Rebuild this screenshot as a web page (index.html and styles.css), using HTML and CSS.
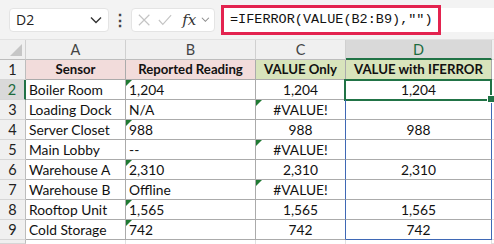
FILE: index.html
```html
<!DOCTYPE html>
<html lang="en">
<head>
    <meta charset="UTF-8">
    <title>IFERROR with VALUE</title>
    <link rel="stylesheet" href="styles.css">
</head>
<body>
    <!-- Formula bar -->
    <div class="toolbar">
        <div class="name-box">
            <span>D2</span>
            <svg class="chevron" width="12" height="8" viewBox="0 0 12 8"><path d="M1 1.5 L6 6.5 L11 1.5" fill="none" stroke="#333" stroke-width="1.4"/></svg>
        </div>
        <div class="dots">&#8942;</div>
        <div class="fx-box">
            <svg width="14" height="14" viewBox="0 0 14 14"><path d="M1 1 L13 13 M13 1 L1 13" stroke="#c4c4c4" stroke-width="1.3"/></svg>
            <svg width="16" height="14" viewBox="0 0 16 14"><path d="M1 7 L5.5 12 L15 1.5" fill="none" stroke="#c4c4c4" stroke-width="1.3"/></svg>
            <span class="fx">fx</span>
            <svg width="10" height="7" viewBox="0 0 10 7"><path d="M1 1.5 L5 5.5 L9 1.5" fill="none" stroke="#888" stroke-width="1.2"/></svg>
        </div>
        <div class="formula-field">
            <span class="formula">=IFERROR(VALUE(B2:B9),"")</span>
        </div>
    </div>

    <!-- Sheet -->
    <div class="sheet">
        <div class="hd corner"></div>
        <div class="hd">A</div>
        <div class="hd">B</div>
        <div class="hd">C</div>
        <div class="hd hd-active">D</div>
        <div class="hd rest"></div>

        <div class="rh">1</div>
        <div class="c title pink">Sensor</div>
        <div class="c title pink">Reported Reading</div>
        <div class="c title green">VALUE Only</div>
        <div class="c title green">VALUE with IFERROR</div>
        <div class="rest"></div>

        <div class="rh rh-active">2</div>
        <div class="c">Boiler Room</div>
        <div class="c flag">1,204</div>
        <div class="c mid">1,204</div>
        <div class="c mid sel">1,204</div>
        <div class="rest"></div>

        <div class="rh">3</div>
        <div class="c">Loading Dock</div>
        <div class="c">N/A</div>
        <div class="c mid flag blue-r">#VALUE!</div>
        <div class="c mid blue-r"></div>
        <div class="rest"></div>

        <div class="rh">4</div>
        <div class="c">Server Closet</div>
        <div class="c flag">988</div>
        <div class="c mid blue-r">988</div>
        <div class="c mid blue-r">988</div>
        <div class="rest"></div>

        <div class="rh">5</div>
        <div class="c">Main Lobby</div>
        <div class="c">--</div>
        <div class="c mid flag blue-r">#VALUE!</div>
        <div class="c mid blue-r"></div>
        <div class="rest"></div>

        <div class="rh">6</div>
        <div class="c">Warehouse A</div>
        <div class="c flag">2,310</div>
        <div class="c mid blue-r">2,310</div>
        <div class="c mid blue-r">2,310</div>
        <div class="rest"></div>

        <div class="rh">7</div>
        <div class="c">Warehouse B</div>
        <div class="c">Offline</div>
        <div class="c mid flag blue-r">#VALUE!</div>
        <div class="c mid blue-r"></div>
        <div class="rest"></div>

        <div class="rh">8</div>
        <div class="c">Rooftop Unit</div>
        <div class="c flag">1,565</div>
        <div class="c mid blue-r">1,565</div>
        <div class="c mid blue-r">1,565</div>
        <div class="rest"></div>

        <div class="rh">9</div>
        <div class="c">Cold Storage</div>
        <div class="c flag">742</div>
        <div class="c mid blue-r">742</div>
        <div class="c mid blue-r blue-b">742</div>
        <div class="rest"></div>

        <div class="rh"></div>
        <div class="c blank"></div>
        <div class="c blank"></div>
        <div class="c blank"></div>
        <div class="c blank"></div>
        <div class="rest"></div>
    </div>
</body>
</html>
```

FILE: styles.css
```css
/* Page */
body {
    margin: 0;
    background-color: #ffffff;
    font-family: "Lato", "Noto Sans", sans-serif;
    color: #111;
    height: 244px;
    overflow: hidden;
}

/* Formula bar */
.toolbar {
    height: 40px;
    box-sizing: border-box;
    background-color: #f3f3f3;
    display: flex;
    align-items: center;
    padding: 0 0 0 9px;
    border-bottom: 1px solid #e2e2e2;
}

.name-box {
    width: 100px;
    height: 24px;
    box-sizing: border-box;
    background-color: #fff;
    border: 1px solid #e4e4e4;
    border-radius: 4px;
    display: flex;
    align-items: center;
    justify-content: space-between;
    padding: 0 6px 0 6px;
    font-family: "Open Sans", "Noto Sans", sans-serif;
    font-size: 14px;
    color: #222;
}

.dots {
    width: 22px;
    text-align: center;
    font-size: 16px;
    font-weight: bold;
    color: #444;
}

.fx-box {
    width: 84px;
    height: 24px;
    box-sizing: border-box;
    background-color: #fff;
    border: 1px solid #e4e4e4;
    border-radius: 4px;
    display: flex;
    align-items: center;
    gap: 8px;
    padding: 0 4px 0 6px;
}

.fx {
    font-family: "DejaVu Serif", "Liberation Serif", serif;
    font-style: italic;
    font-size: 15px;
    color: #333;
    margin-left: 2px;
    margin-right: -3px;
}

.formula-field {
    flex: 1;
    height: 24px;
    margin-left: 6px;
    background-color: #fff;
    display: flex;
    align-items: center;
}

.formula {
    height: 30px;
    width: 220px;
    box-sizing: border-box;
    border: 3px solid #e3234f;
    display: flex;
    align-items: center;
    padding-left: 6px;
    font-family: "Liberation Mono", "DejaVu Sans Mono", monospace;
    font-size: 13.5px;
    color: #111;
}

/* Sheet grid */
.sheet {
    display: grid;
    grid-template-columns: 26px 100px 130px 90px 146px 1fr;
    grid-template-rows: repeat(10, 20px) 4px;
    font-size: 13.8px;
}

.sheet > div {
    box-sizing: border-box;
    line-height: 19px;
    white-space: nowrap;
    overflow: visible;
}

.hd {
    background-color: #f0f0f0;
    border-right: 1px solid #d0d0d0;
    border-bottom: 1px solid #bdbdbd;
    text-align: center;
    color: #444;
    font-size: 14.5px;
}

.hd-active {
    background-color: #d9d9d9;
    color: #1d6b3e;
    border-bottom: 2px solid #217346;
}

.corner {
    position: relative;
}

.corner::after {
    content: "";
    position: absolute;
    right: 3px;
    bottom: 3px;
    border-left: 12px solid transparent;
    border-bottom: 12px solid #c6c6c6;
}

.rh {
    background-color: #f0f0f0;
    border-right: 1px solid #bdbdbd;
    border-bottom: 1px solid #d6d6d6;
    text-align: center;
    color: #222;
    font-size: 14.5px;
}

.rh-active {
    background-color: #d9d9d9;
    color: #1d6b3e;
    border-right: 2px solid #217346;
}

.rest {
    border-bottom: 1px solid #e0e0e0;
}

.hd.rest {
    border-right: none;
}

.c {
    position: relative;
    border-right: 1px solid #ababab;
    border-bottom: 1px solid #ababab;
    padding-left: 3px;
}

.c.mid {
    text-align: center;
    padding-left: 0;
}

.c.title {
    font-weight: bold;
    font-size: 13.2px;
    text-align: center;
    padding-left: 0;
}

.pink {
    background-color: #f2dcdb;
}

.green {
    background-color: #d8e4bc;
}

.c.blank {
    border-right: 1px solid #e0e0e0;
    border-bottom: none;
}

.blue-r {
    border-right-color: #3f68b5;
}

.blue-b {
    border-bottom-color: #3f68b5;
}

/* Green error indicator */
.flag::before {
    content: "";
    position: absolute;
    left: 0;
    top: 0;
    border-top: 6px solid #1f7a33;
    border-right: 6px solid transparent;
}

/* Active cell */
.sel::after {
    content: "";
    position: absolute;
    left: -2px;
    top: -1px;
    right: -1px;
    bottom: -2px;
    border: 2px solid #217346;
}

.sel::before {
    content: "";
    position: absolute;
    right: -4px;
    bottom: -4px;
    width: 6px;
    height: 6px;
    background-color: #217346;
    border: 1px solid #fff;
    z-index: 2;
}
```
